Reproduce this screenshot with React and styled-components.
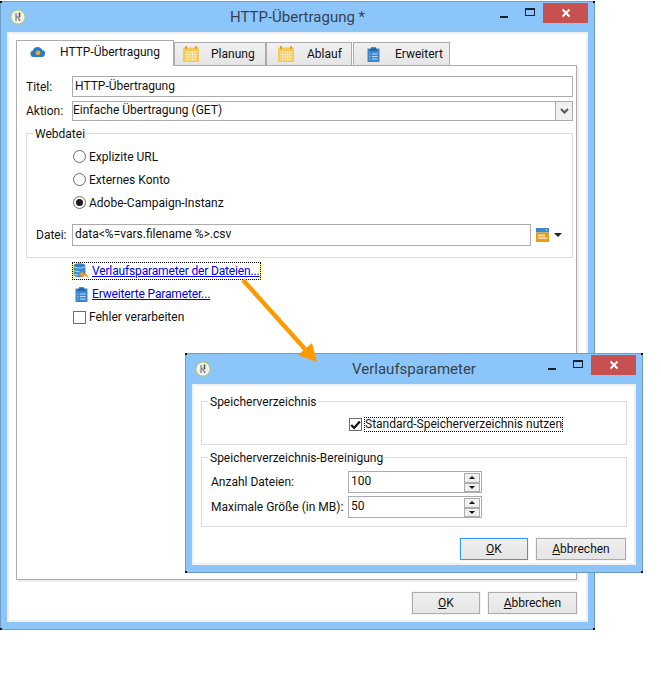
import React from 'react';
import styled, { createGlobalStyle, css } from 'styled-components';

const GlobalStyle = createGlobalStyle`
    html, body {
        margin: 0;
        background: #fff;
    }
    body {
        font-family: Roboto, "Noto Sans", sans-serif;
        font-size: 12px;
        color: #111;
    }
`;

const Page = styled.div`
    position: relative;
    width: 661px;
    height: 688px;
    padding-top: 1px;
    box-sizing: border-box;
    overflow: hidden;
`;

const Frame = styled.div`
    position: relative;
    box-sizing: border-box;
    display: flex;
    flex-direction: column;
    width: ${(p) => p.$width}px;
    height: ${(p) => p.$height}px;
    border: 1px solid #6f9cc4;
    background: #8cc5f9;
    padding: 0 6px 7px 6px;
    /* the small dark corner pixels of the window */
    &::after {
        content: '';
        position: absolute;
        inset: -1px;
        pointer-events: none;
        background:
            linear-gradient(#111, #111) left top / 2px 2px no-repeat,
            linear-gradient(#111, #111) right top / 2px 2px no-repeat,
            linear-gradient(#111, #111) left bottom / 2px 2px no-repeat,
            linear-gradient(#111, #111) right bottom / 2px 2px no-repeat;
    }
`;

const DialogFrame = styled(Frame)`
    position: absolute;
    left: 185px;
    top: 353px;
    z-index: 2;
`;

const TitleBar = styled.div`
    display: grid;
    grid-template-columns: 1fr auto 1fr;
    align-items: center;
    height: 30px;
    flex: none;
`;

const TitleText = styled.div`
    font-size: 15px;
    line-height: 30px;
    color: #36434f;
`;

const AppIconWrap = styled.div`
    padding-left: 3px;
    display: flex;
`;

const WindowControls = styled.div`
    display: flex;
    justify-content: flex-end;
    align-self: start;
`;

const ControlButton = styled.div`
    width: ${(p) => (p.$close ? 45 : 26)}px;
    height: 20px;
    display: flex;
    align-items: center;
    justify-content: center;
    background: ${(p) => (p.$close ? '#c75050' : 'transparent')};
    margin-top: 1px;
`;

const MinGlyph = styled.div`
    width: 8px;
    height: 2px;
    background: #17232e;
    margin-top: 8px;
`;

const MaxGlyph = styled.div`
    width: 8px;
    height: 5px;
    border: 1px solid #17232e;
    border-top-width: 2px;
    margin-top: -3px;
`;

const WindowBody = styled.div`
    flex: 1;
    display: flex;
    flex-direction: column;
    border: 2px solid #f0f0f0;
    background: #fff;
    min-height: 0;
`;

const MainBody = styled(WindowBody)`
    padding: 6px 9px 0 7px;
`;

const DialogBody = styled(WindowBody)`
    padding: 7px 7px 0 7px;
`;

const TabRow = styled.div`
    display: flex;
    align-items: flex-end;
    height: 25px;
    flex: none;
`;

const Tab = styled.div`
    box-sizing: border-box;
    display: flex;
    align-items: center;
    gap: ${(p) => p.$gap}px;
    width: ${(p) => p.$width}px;
    padding-left: ${(p) => p.$pad}px;
    margin-left: ${(p) => p.$offset || 0}px;
    border: 1px solid #acacac;
    border-bottom: none;
    ${(p) =>
        p.$active
            ? css`
                  height: 26px;
                  padding-bottom: 3px;
                  margin-bottom: -1px;
                  background: #fff;
                  position: relative;
                  z-index: 1;
              `
            : css`
                  height: 23px;
                  background: linear-gradient(#f0f0f0, #e5e5e5);
              `}
`;

const TabPane = styled.div`
    box-sizing: border-box;
    height: 515px;
    flex: none;
    border: 1px solid #acacac;
    box-shadow: 2px 2px 0 #f0f0f0;
    padding: 10px 3px 0 9px;
`;

const FormRow = styled.div`
    display: flex;
    align-items: center;
    margin-bottom: 4px;
`;

const FieldLabel = styled.div`
    width: ${(p) => p.$width}px;
    flex: none;
    white-space: nowrap;
`;

const TextField = styled.div`
    box-sizing: border-box;
    height: ${(p) => p.$height || 21}px;
    flex: 1;
    min-width: 0;
    border: 1px solid #acacac;
    background: #fff;
    line-height: ${(p) => (p.$height || 21) - 3}px;
    padding-left: ${(p) => p.$indent ?? 2}px;
`;

const SelectField = styled.div`
    box-sizing: border-box;
    height: 20px;
    flex: 1;
    display: flex;
    justify-content: space-between;
    border: 1px solid #acacac;
    line-height: 17px;
`;

const SelectArrow = styled.div`
    width: 16px;
    display: flex;
    align-items: center;
    justify-content: center;
    background: #f0f0f0;
    border-left: 1px solid #acacac;
`;

const GroupBox = styled.fieldset`
    box-sizing: border-box;
    margin: 0;
    padding: 0;
    min-width: 0;
    border: 1px solid #dcdcdc;
    border-radius: 0;
`;

const GroupTitle = styled.legend`
    padding: 2px 1px 0 2px;
    margin-left: ${(p) => p.$indent}px;
    line-height: 14px;
`;

const WebGroup = styled(GroupBox)`
    height: 133px;
`;

const RadioList = styled.div`
    padding: 4px 0 0 46px;
`;

const OptionRow = styled.div`
    display: flex;
    align-items: center;
    gap: 3px;
    height: ${(p) => p.$height || 23}px;
    padding-left: ${(p) => p.$indent || 0}px;
`;

const RadioMark = styled.span`
    box-sizing: border-box;
    width: 13px;
    height: 13px;
    border-radius: 50%;
    border: 1px solid #6e6e6e;
    display: flex;
    align-items: center;
    justify-content: center;
    &::after {
        content: '';
        display: ${(p) => (p.$checked ? 'block' : 'none')};
        width: 7px;
        height: 7px;
        border-radius: 50%;
        background: #1c1c1c;
    }
`;

const CheckMark = styled.span`
    box-sizing: border-box;
    width: 13px;
    height: 13px;
    border: 1px solid #6e6e6e;
    background: #fff;
    display: flex;
    align-items: center;
    justify-content: center;
    flex: none;
`;

const FileRow = styled.div`
    display: flex;
    align-items: center;
    padding-left: 9px;
    margin-top: 10px;
`;

const FileField = styled(TextField)`
    flex: none;
    width: 459px;
`;

const FileActions = styled.div`
    display: flex;
    align-items: center;
    gap: 5px;
    padding-left: 5px;
`;

const DownTriangle = styled.span`
    width: 0;
    height: 0;
    border-left: 4px solid transparent;
    border-right: 4px solid transparent;
    border-top: 4px solid #222;
`;

const LinkList = styled.div`
    display: flex;
    flex-direction: column;
    align-items: flex-start;
    gap: 5px;
    padding: 4px 0 0 46px;
`;

const LinkRow = styled.div`
    box-sizing: border-box;
    display: flex;
    align-items: center;
    gap: ${(p) => (p.$focused ? 3 : 4)}px;
    height: 18px;
    padding-left: ${(p) => (p.$focused ? 0 : 2)}px;
    border: 1px solid transparent;
    ${(p) =>
        p.$focused &&
        css`
            border: 1px dotted #000;
            background: linear-gradient(#fff, #fff) padding-box, linear-gradient(#ffff33, #ffff33) border-box;
        `}
`;

const PlainLink = styled.a`
    color: #0000ee;
    text-decoration: underline;
    letter-spacing: -0.15px;
`;

const ArrowOverlay = styled.svg`
    position: absolute;
    left: 235px;
    top: 272px;
    z-index: 3;
`;

const DirectoryGroup = styled(GroupBox)`
    height: 52px;
`;

const CheckRow = styled.div`
    display: flex;
    align-items: center;
    gap: 2px;
    padding: 8px 0 0 147px;
`;

const FocusLabel = styled.span`
    border: 1px dotted #000;
    line-height: 13px;
`;

const CleanupGroup = styled(GroupBox)`
    height: 78px;
    margin-top: 4px;
`;

const SpinRow = styled.div`
    display: flex;
    align-items: center;
    padding-left: 9px;
    margin-bottom: 3px;
    &:first-of-type {
        margin-top: 6px;
    }
`;

const SpinField = styled.div`
    box-sizing: border-box;
    width: 134px;
    height: 22px;
    flex: none;
    display: flex;
    justify-content: space-between;
    border: 1px solid #acacac;
    line-height: 18px;
    padding-left: 2px;
`;

const SpinButtons = styled.div`
    display: flex;
    flex-direction: column;
    padding: 1px 1px 0 0;
`;

const SpinButton = styled.div`
    box-sizing: border-box;
    width: 16px;
    height: 9.5px;
    border: 1px solid #acacac;
    background: #efefef;
    display: flex;
    align-items: center;
    justify-content: center;
    &::after {
        content: '';
        border-left: 3px solid transparent;
        border-right: 3px solid transparent;
        ${(p) => (p.$up ? 'border-bottom: 3px solid #111;' : 'border-top: 3px solid #111;')}
    }
`;

const ButtonRow = styled.div`
    display: flex;
    justify-content: flex-end;
    gap: 8px;
    padding-top: ${(p) => p.$top}px;
    padding-right: ${(p) => p.$right}px;
`;

const PushButton = styled.button`
    box-sizing: border-box;
    width: ${(p) => p.$width}px;
    height: 22px;
    padding: 0;
    font: inherit;
    color: #111;
    background: linear-gradient(#f0f0f0, #e5e5e5);
    border: 1px solid ${(p) => (p.$default ? '#3399ff' : '#acacac')};
    outline: 1px solid #f4f4f4;
`;

const AppIcon = () => (
    <svg width="16" height="16" viewBox="0 0 16 16">
        <circle cx="8" cy="8" r="7.2" fill="#f2f2ec" stroke="#a9c77e" strokeWidth="1.2" />
        <path d="M6 4v8M6.5 7l2.5 3" stroke="#8b8b8b" strokeWidth="1.4" fill="none" />
        <path d="M9.5 3.5v5" stroke="#555" strokeWidth="1.6" fill="none" />
        <circle cx="9.5" cy="11" r="1" fill="#777" />
    </svg>
);

const CloseGlyph = () => (
    <svg width="10" height="10" viewBox="0 0 10 10">
        <path d="M1.5 1.5l7 7M8.5 1.5l-7 7" stroke="#fff" strokeWidth="2" />
    </svg>
);

const WindowButtons = () => (
    <WindowControls>
        <ControlButton><MinGlyph /></ControlButton>
        <ControlButton><MaxGlyph /></ControlButton>
        <ControlButton $close><CloseGlyph /></ControlButton>
    </WindowControls>
);

const CloudIcon = () => (
    <svg width="16" height="10" viewBox="0 0 16 10">
        <path d="M3.5 10a3.3 3.3 0 0 1-.6-6.5A5 5 0 0 1 12.2 3 3.6 3.6 0 0 1 12.5 10z" fill="#2a7cc7" />
        <circle cx="8" cy="5.8" r="2.4" fill="#f7a531" />
    </svg>
);

const CalendarIcon = () => (
    <svg width="16" height="16" viewBox="0 0 16 16">
        <rect x="0" y="1.5" width="16" height="14.5" fill="#f6c95a" />
        <rect x="2" y="0" width="2" height="3" fill="#d9a63a" />
        <rect x="12" y="0" width="2" height="3" fill="#d9a63a" />
        <path d="M2 6h12M2 8.5h12M2 11h12M2 13.5h12M4.5 5v10M7 5v10M9.5 5v10M12 5v10" stroke="#fbe7ad" strokeWidth="1" />
    </svg>
);

const ClipboardIcon = () => (
    <svg width="13" height="16" viewBox="0 0 13 16">
        <rect x="0.5" y="2.5" width="12" height="13.5" fill="#3a87d0" />
        <path d="M4 3V1.2h5V3h1.5v2h-8V3z" fill="#2566a6" />
        <path d="M2.5 8h1M5 8h5.5M2.5 10.5h1M5 10.5h5.5M2.5 13h1M5 13h5.5" stroke="#bcdcf7" strokeWidth="1" />
    </svg>
);

const HistoryIcon = () => (
    <svg width="16" height="16" viewBox="0 0 16 16">
        <ellipse cx="6.5" cy="2.5" rx="6" ry="2.2" fill="#2f7fc4" />
        <path d="M0.5 3v9c0 1.2 2.7 2.2 6 2.2S12.5 13 12.5 12V3c0 1.2-2.7 2.2-6 2.2S.5 4.2.5 3z" fill="#3b8ed4" />
        <path d="M0.5 7c1 1.3 3 1.7 6 1.7M0.5 10.5c1 1 3 1.4 5 1.4" stroke="#d5e9f8" strokeWidth="0.9" fill="none" />
        <path d="M15.5 15.5c0-3.5-2-5-5.5-5V8l-4 3.5L10 15v-2.3c2.500 0 4.500 1 5.500 2.800z" fill="#f09a1a" />
    </svg>
);

const FileVarIcon = () => (
    <svg width="13" height="14" viewBox="0 0 13 14">
        <rect width="13" height="4.5" fill="#3a87d0" />
        <rect x="9.5" y="1.5" width="2" height="1" fill="#cfe5f8" />
        <rect y="4.5" width="13" height="9.5" fill="#f09a10" />
        <rect x="2" y="6.5" width="7" height="2" fill="#fde3b5" />
        <rect x="2" y="9.5" width="9" height="1.5" fill="#fde3b5" />
    </svg>
);

const ChevronDown = () => (
    <svg width="9" height="6" viewBox="0 0 9 6">
        <path d="M1 1l3.5 3.5L8 1" stroke="#555" strokeWidth="2" fill="none" />
    </svg>
);

const Tick = () => (
    <svg width="11" height="10" viewBox="0 0 11 10">
        <path d="M1.2 5l3 3L9.8 1.500" stroke="#111" strokeWidth="2.2" fill="none" />
    </svg>
);

const GuideArrow = () => (
    <ArrowOverlay width="90" height="100" viewBox="0 0 90 100">
        <path d="M8 8L70 77" stroke="#ff9900" strokeWidth="4.5" fill="none" />
        <path d="M82 90L63 83L77 71z" fill="#ff9900" />
    </ArrowOverlay>
);

const Spinner = () => (
    <SpinButtons>
        <SpinButton $up />
        <SpinButton />
    </SpinButtons>
);

const App = () => (
    <Page>
        <GlobalStyle />
        <Frame $width={595} $height={629}>
            <TitleBar>
                <AppIconWrap><AppIcon /></AppIconWrap>
                <TitleText>HTTP-Übertragung *</TitleText>
                <WindowButtons />
            </TitleBar>
            <MainBody>
                <TabRow>
                    <Tab $active $width={158} $pad={13} $gap={14}><CloudIcon />HTTP-Übertragung</Tab>
                    <Tab $width={92} $pad={8} $gap={12}><CalendarIcon />Planung</Tab>
                    <Tab $width={86} $pad={11} $gap={13}><CalendarIcon />Ablauf</Tab>
                    <Tab $width={97} $pad={13} $gap={15} $offset={1}><ClipboardIcon />Erweitert</Tab>
                </TabRow>
                <TabPane>
                    <FormRow>
                        <FieldLabel $width={46}>Titel:</FieldLabel>
                        <TextField>HTTP-Übertragung</TextField>
                    </FormRow>
                    <FormRow>
                        <FieldLabel $width={46}>Aktion:</FieldLabel>
                        <SelectField>
                            Einfache Übertragung (GET)
                            <SelectArrow><ChevronDown /></SelectArrow>
                        </SelectField>
                    </FormRow>
                    <WebGroup>
                        <GroupTitle $indent={6}>Webdatei</GroupTitle>
                        <RadioList>
                            <OptionRow><RadioMark />Explizite URL</OptionRow>
                            <OptionRow><RadioMark />Externes Konto</OptionRow>
                            <OptionRow><RadioMark $checked />Adobe-Campaign-Instanz</OptionRow>
                        </RadioList>
                        <FileRow>
                            <FieldLabel $width={36}>Datei:</FieldLabel>
                            <FileField $height={22}>data&lt;%=vars.filename %&gt;.csv</FileField>
                            <FileActions>
                                <FileVarIcon />
                                <DownTriangle />
                            </FileActions>
                        </FileRow>
                    </WebGroup>
                    <LinkList>
                        <LinkRow $focused>
                            <HistoryIcon />
                            <PlainLink>Verlaufsparameter der Dateien...</PlainLink>
                        </LinkRow>
                        <LinkRow>
                            <ClipboardIcon />
                            <PlainLink>Erweiterte Parameter...</PlainLink>
                        </LinkRow>
                        <OptionRow $height={18} $indent={1}><CheckMark />Fehler verarbeiten</OptionRow>
                    </LinkList>
                </TabPane>
                <ButtonRow $top={12} $right={0}>
                    <PushButton $width={68}><u>O</u>K</PushButton>
                    <PushButton $width={89}><u>A</u>bbrechen</PushButton>
                </ButtonRow>
            </MainBody>
        </Frame>
        <GuideArrow />
        <DialogFrame $width={458} $height={220}>
            <TitleBar>
                <AppIconWrap><AppIcon /></AppIconWrap>
                <TitleText>Verlaufsparameter</TitleText>
                <WindowButtons />
            </TitleBar>
            <DialogBody>
                <DirectoryGroup>
                    <GroupTitle $indent={6}>Speicherverzeichnis</GroupTitle>
                    <CheckRow>
                        <CheckMark><Tick /></CheckMark>
                        <FocusLabel>Standard-Speicherverzeichnis nutzen</FocusLabel>
                    </CheckRow>
                </DirectoryGroup>
                <CleanupGroup>
                    <GroupTitle $indent={6}>Speicherverzeichnis-Bereinigung</GroupTitle>
                    <SpinRow>
                        <FieldLabel $width={137}>Anzahl Dateien:</FieldLabel>
                        <SpinField>100<Spinner /></SpinField>
                    </SpinRow>
                    <SpinRow>
                        <FieldLabel $width={137}>Maximale Größe (in MB):</FieldLabel>
                        <SpinField>50<Spinner /></SpinField>
                    </SpinRow>
                </CleanupGroup>
                <ButtonRow $top={11} $right={1}>
                    <PushButton $width={68} $default><u>O</u>K</PushButton>
                    <PushButton $width={90}><u>A</u>bbrechen</PushButton>
                </ButtonRow>
            </DialogBody>
        </DialogFrame>
    </Page>
);

export default App;
